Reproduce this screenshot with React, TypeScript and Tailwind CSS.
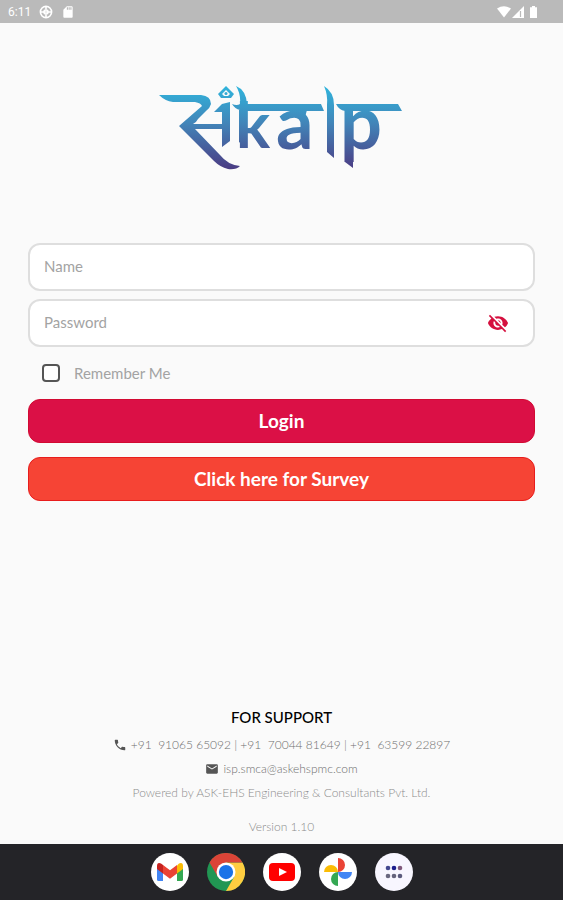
import { useState } from 'react';
import { MdEmail, MdPhone, MdSdCard, MdVisibility, MdVisibilityOff } from 'react-icons/md';

const phones = ['+91\u00a0 91065 65092', '+91\u00a0 70044 81649', '+91\u00a0 63599 22897'];

function StatusBar() {
  return (
    <div className="flex h-[23px] items-center justify-between bg-[#bababa] pr-6 pl-2 text-white">
      <div className="flex items-center gap-2">
        <span className="font-['Roboto',sans-serif] text-xs">6:11</span>
        <svg viewBox="0 0 14 14" className="size-3.5" fill="none" stroke="currentColor" strokeWidth="1.6">
          <circle cx="7" cy="7" r="5.6" />
          <path d="M2 7h10M7 1.5v3M7 9.500v3" />
          <circle cx="7" cy="7" r="2" />
        </svg>
        <MdSdCard className="size-3.5" />
      </div>
      <div className="flex items-center">
        <svg viewBox="0 0 42 14" className="h-3.5" fill="currentColor">
          <path d="M0 3.600Q7 -1 14 3.600L7 12.500z" />
          <path d="M27 1v12H15z" />
          <path d="M23.500 6v6" stroke="#bababa" strokeWidth="1.200" />
          <path d="M35 1h3v1.300h2v10.700h-7V2.300h2z" />
        </svg>
      </div>
    </div>
  );
}

function Logo() {
  return (
    <svg viewBox="0 0 264 105" className="w-66" role="img" aria-label="Sankalp">
      <defs>
        <linearGradient id="ink" gradientUnits="userSpaceOnUse" x1="0" y1="10" x2="0" y2="94">
          <stop offset="0" stopColor="#2fb4dc" />
          <stop offset="0.45" stopColor="#4284b8" />
          <stop offset="1" stopColor="#4b3a82" />
        </linearGradient>
      </defs>
      <g fill="url(#ink)">
        {/* calligraphic mark */}
        <path d="M9 19H51Q61 20 61 28Q60 32 56 35L48 43Q46 47 43 48H72V36L64 36L72 28L80 26V65L72 71V53H45L70 79Q78 89 90 90Q86 94 78 93Q70 91 64 85L29 50L52 30Q51 27 45 26H23Q15 25 9 19z" />
        {/* crown */}
        <path d="M76 10L84 18L81 22H71L68 18zM76 14L72 18L74 20H78L80 18z" fillRule="evenodd" />
        <circle cx="76" cy="17.500" r="1.500" />
        {/* head line and pen flares */}
        <path d="M82 28Q87 30 90 28Q91 18 86 10Q96 14 97 28H171L174 35H97L90 34Q85 33 82 28z" />
        <path d="M150 34H157L155 41H148z" />
        <path d="M174 10Q184 16 184 29V82L177 76V29Q178 19 174 10z" />
        <path d="M186 28H248L252 35H203V92L195 86V35Q189 34 186 28z" />
        <path d="M89 34H97V72L89 66z" />
        <g className="font-['Lato',sans-serif] font-bold">
          <text x="86" y="72" fontSize="64">k</text>
          <text x="126" y="73" fontSize="74">a</text>
          <text x="190" y="73" fontSize="74">p</text>
        </g>
      </g>
    </svg>
  );
}

function Dock() {
  return (
    <nav className="flex h-14 items-center justify-center gap-4.5 bg-[#242428]">
      <button aria-label="Gmail" className="flex size-9.5 items-center justify-center rounded-full bg-white">
        <svg viewBox="0 0 26 20" className="w-6.5">
          <path d="M0 4v13.500Q0 19 1.500 19H6V7z" fill="#4285f4" />
          <path d="M26 4v13.500Q26 19 24.500 19H20V7z" fill="#34a853" />
          <path d="M20 3.500L22 1.500Q26 0 26 4V7l-6 4.500z" fill="#fbbc04" />
          <path d="M0 4Q0 0 4 1.500L6 3v8.500L0 7z" fill="#c5221f" />
          <path d="M6 3l7 5.300L20 3v8.500l-7 5.300-7-5.300z" fill="#ea4335" />
        </svg>
      </button>
      <button aria-label="Chrome" className="size-9.5 rounded-full">
        <svg viewBox="0 0 48 48">
          <circle cx="24" cy="24" r="24" fill="#219653" />
          <path d="M24 12H44.800A24 24 0 0 1 24 48L34.400 30z" fill="#ffcd40" />
          <path d="M13.600 30L3.200 12A24 24 0 0 1 44.800 12H24z" fill="#db4437" />
          <circle cx="24" cy="24" r="12" fill="#fff" />
          <circle cx="24" cy="24" r="9" fill="#1a73e8" />
        </svg>
      </button>
      <button aria-label="YouTube" className="flex size-9.5 items-center justify-center rounded-full bg-white">
        <svg viewBox="0 0 26 18" className="w-6.5">
          <rect width="26" height="18" rx="4" fill="#f00" />
          <path d="M10 5l8 4-8 4z" fill="#fff" />
        </svg>
      </button>
      <button aria-label="Photos" className="flex size-9.5 items-center justify-center rounded-full bg-white">
        <svg viewBox="0 0 28 28" className="w-7">
          <path d="M14 0A7 7 0 0 1 14 14z" fill="#ea4335" />
          <path d="M28 14A7 7 0 0 1 14 14z" fill="#4285f4" />
          <path d="M14 28A7 7 0 0 1 14 14z" fill="#34a853" />
          <path d="M0 14A7 7 0 0 1 14 14z" fill="#fbbc04" />
        </svg>
      </button>
      <button aria-label="All apps" className="flex size-9.5 items-center justify-center rounded-full bg-[#f8f6ff]">
        <svg viewBox="0 0 18 14" className="w-4.5">
          <circle cx="3" cy="3" r="2.300" fill="#43478f" />
          <circle cx="9" cy="3" r="2.300" fill="#1d1d8c" />
          <circle cx="15" cy="3" r="2.300" fill="#80587c" />
          <circle cx="3" cy="11" r="2.300" fill="#69677f" />
          <circle cx="9" cy="11" r="2.300" fill="#65637c" />
          <circle cx="15" cy="11" r="2.300" fill="#5b5a7d" />
        </svg>
      </button>
    </nav>
  );
}

export default function App() {
  const [showPassword, setShowPassword] = useState(false);

  return (
    <div className="flex min-h-screen flex-col bg-[#fafafa] font-['Lato',sans-serif]">
      <StatusBar />

      <main className="flex flex-1 flex-col px-7">
        <div className="flex justify-center pt-[53px]">
          <Logo />
        </div>

        <form className="mt-[62px] flex flex-col" onSubmit={(e) => e.preventDefault()}>
          <input
            type="text"
            aria-label="Name"
            placeholder="Name"
            className="h-12 w-full rounded-xl border-2 border-[#dedede] bg-white px-3.5 pb-0.5 text-[15px] placeholder:text-[#a3a3a3]"
          />
          <div className="mt-2 flex h-12 items-center rounded-xl border-2 border-[#dedede] bg-white pr-6 pl-3.5">
            <input
              type={showPassword ? 'text' : 'password'}
              aria-label="Password"
              placeholder="Password"
              className="min-w-0 flex-1 pb-0.5 text-[15px] outline-none placeholder:text-[#a3a3a3]"
            />
            <button
              type="button"
              aria-label="Toggle password"
              onClick={() => setShowPassword(!showPassword)}
              className="text-[#d5103f]"
            >
              {showPassword ? <MdVisibility className="size-5.5" /> : <MdVisibilityOff className="size-5.5" />}
            </button>
          </div>

          <label className="mt-4 flex h-5 items-center gap-3.5 pl-3.5 text-[15px] text-[#a3a3a3]">
            <input
              type="checkbox"
              className="size-4.5 appearance-none rounded-sm border-2 border-[#555] bg-white checked:bg-[#db1046]"
            />
            Remember Me
          </label>

          <button
            type="submit"
            className="mt-4 h-11 rounded-xl border border-[#d20a32] bg-[#db1046] text-[19px] font-bold text-white"
          >
            Login
          </button>
          <button
            type="button"
            className="mt-3.5 h-11 rounded-xl border border-[#e81c1c] bg-[#f64435] text-[19px] font-bold text-white"
          >
            Click here for Survey
          </button>
        </form>

        <footer className="mt-auto flex flex-col items-center pb-[7px] text-center text-xs font-light text-[#6f6f6f]">
          <h2 className="text-[15px] leading-6 font-medium text-black">FOR SUPPORT</h2>
          <p className="mt-1 flex h-6 items-center gap-1">
            <MdPhone className="size-3.5 text-[#555]" />
            {phones.join(' | ')}
          </p>
          <p className="flex h-6 items-center gap-1">
            <MdEmail className="size-3.5 text-[#555]" />
            <a href="mailto:isp.smca@askehspmc.com">isp.smca@askehspmc.com</a>
          </p>
          <p className="h-6 leading-6 text-[#8c8c8c]">Powered by ASK-EHS Engineering &amp; Consultants Pvt. Ltd.</p>
          <p className="mt-3 leading-5 text-[#8c8c8c]">Version 1.10</p>
        </footer>
      </main>

      <Dock />
    </div>
  );
}
